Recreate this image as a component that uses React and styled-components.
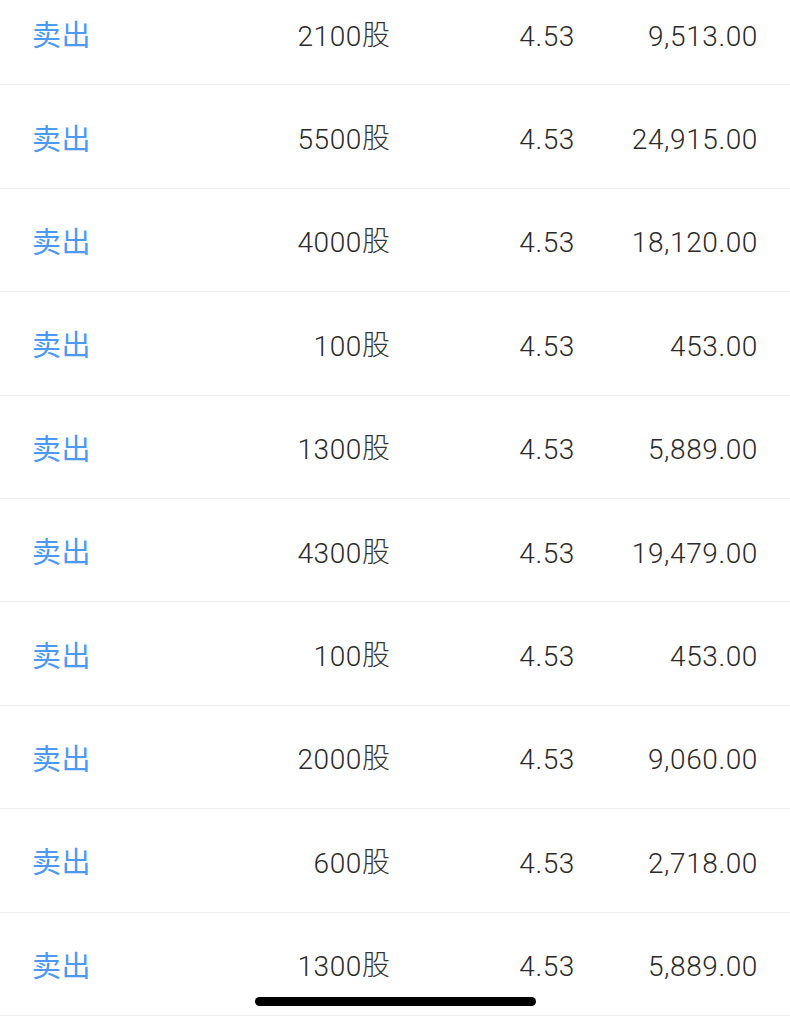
import React from 'react';
import styled, { createGlobalStyle } from 'styled-components';

const GlobalStyle = createGlobalStyle`
  html, body {
    margin: 0;
    padding: 0;
    background: #ffffff;
    overflow: hidden;
  }
  * { box-sizing: border-box; }
`;

const Screen = styled.div`
  position: relative;
  width: 790px;
  height: 1024px;
  overflow: hidden;
  background: #ffffff;
  font-family: Roboto, "Noto Sans CJK SC", sans-serif;
`;

const List = styled.div`
  display: flex;
  flex-direction: column;
  margin-top: -18px;
`;

const Row = styled.div`
  display: grid;
  grid-template-columns: 1fr 200px 185px 183px;
  align-items: center;
  height: 103.4px;
  padding: 7px 32px 0 32px;
  border-bottom: 1px solid #eeeef3;
`;

const Action = styled.span`
  font-size: 29px;
  font-weight: 400;
  color: #4a9af5;
  letter-spacing: 0.5px;
  line-height: 40px;
  margin-top: -1px;
`;

const Cell = styled.span`
  text-align: right;
  font-size: 28px;
  font-weight: 300;
  color: #2a2a2a;
  letter-spacing: 0.6px;
  line-height: 40px;
`;

const Unit = styled.span`
  position: relative;
  top: -1px;
  letter-spacing: 0;
  line-height: 0;
  color: #333333;
`;

const HomeBar = styled.div`
  position: absolute;
  left: 255px;
  bottom: 18px;
  width: 281px;
  height: 9px;
  border-radius: 5px;
  background: #000000;
`;

const trades = [
  { qty: 2100, price: '4.53', amount: '9,513.00' },
  { qty: 5500, price: '4.53', amount: '24,915.00' },
  { qty: 4000, price: '4.53', amount: '18,120.00' },
  { qty: 100, price: '4.53', amount: '453.00' },
  { qty: 1300, price: '4.53', amount: '5,889.00' },
  { qty: 4300, price: '4.53', amount: '19,479.00' },
  { qty: 100, price: '4.53', amount: '453.00' },
  { qty: 2000, price: '4.53', amount: '9,060.00' },
  { qty: 600, price: '4.53', amount: '2,718.00' },
  { qty: 1300, price: '4.53', amount: '5,889.00' },
];

const App = () => {
  return (
    <Screen>
      <GlobalStyle />
      <List>
        {trades.map((t, i) => (
          <Row key={i}>
            <Action>卖出</Action>
            <Cell>{t.qty}<Unit>股</Unit></Cell>
            <Cell>{t.price}</Cell>
            <Cell>{t.amount}</Cell>
          </Row>
        ))}
      </List>
      <HomeBar />
    </Screen>
  );
};

export default App;
